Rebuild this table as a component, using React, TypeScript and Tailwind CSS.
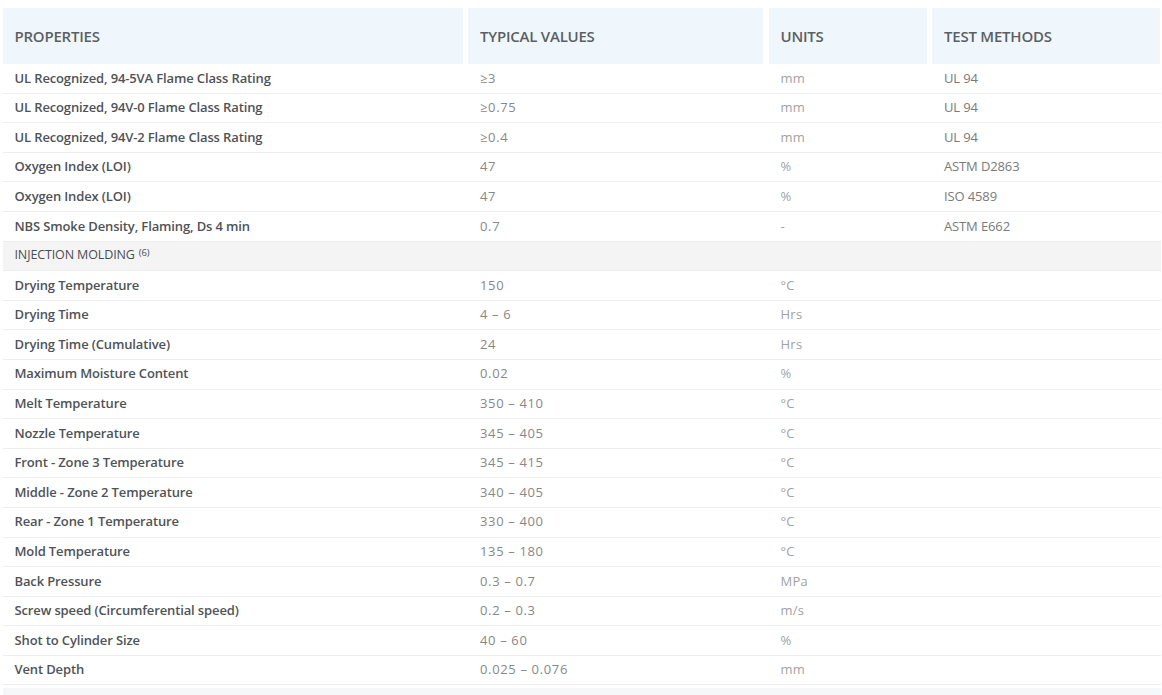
import React from "react";

type Row = {
  name: string;
  value: string;
  unit: string;
  method?: string;
};

const flameRows: Row[] = [
  { name: "UL Recognized, 94-5VA Flame Class Rating", value: "≥3", unit: "mm", method: "UL 94" },
  { name: "UL Recognized, 94V-0 Flame Class Rating", value: "≥0.75", unit: "mm", method: "UL 94" },
  { name: "UL Recognized, 94V-2 Flame Class Rating", value: "≥0.4", unit: "mm", method: "UL 94" },
  { name: "Oxygen Index (LOI)", value: "47", unit: "%", method: "ASTM D2863" },
  { name: "Oxygen Index (LOI)", value: "47", unit: "%", method: "ISO 4589" },
  { name: "NBS Smoke Density, Flaming, Ds 4 min", value: "0.7", unit: "-", method: "ASTM E662" },
];

const moldingRows: Row[] = [
  { name: "Drying Temperature", value: "150", unit: "°C" },
  { name: "Drying Time", value: "4 – 6", unit: "Hrs" },
  { name: "Drying Time (Cumulative)", value: "24", unit: "Hrs" },
  { name: "Maximum Moisture Content", value: "0.02", unit: "%" },
  { name: "Melt Temperature", value: "350 – 410", unit: "°C" },
  { name: "Nozzle Temperature", value: "345 – 405", unit: "°C" },
  { name: "Front - Zone 3 Temperature", value: "345 – 415", unit: "°C" },
  { name: "Middle - Zone 2 Temperature", value: "340 – 405", unit: "°C" },
  { name: "Rear - Zone 1 Temperature", value: "330 – 400", unit: "°C" },
  { name: "Mold Temperature", value: "135 – 180", unit: "°C" },
  { name: "Back Pressure", value: "0.3 – 0.7", unit: "MPa" },
  { name: "Screw speed (Circumferential speed)", value: "0.2 – 0.3", unit: "m/s" },
  { name: "Shot to Cylinder Size", value: "40 – 60", unit: "%" },
  { name: "Vent Depth", value: "0.025 – 0.076", unit: "mm" },
];

const cols = "grid grid-cols-[460px_295px_158px_228px] gap-x-[5.5px]";

function HeaderCell({ label }: { label: string }) {
  return (
    <div className="flex h-[56px] items-center bg-[#f0f7fc] px-3 text-[15px] font-semibold uppercase tracking-[-0.015em] text-[#5b5f63]">
      {label}
    </div>
  );
}

function DataRow({ row }: { row: Row }) {
  return (
    <div className={`${cols} h-[29.6px] items-center border-b border-[#eeeeee] text-[13px]`}>
      <div className="px-3 font-semibold tracking-[-0.01em] text-[#4f5357]">{row.name}</div>
      <div className="px-3 font-normal tracking-[0.05em] text-[#888888]">{row.value}</div>
      <div className="px-3 font-normal tracking-[0.02em] text-[#a2a2a2]">{row.unit}</div>
      <div className="px-3 font-normal tracking-[-0.01em] text-[#7a7a7a]">{row.method ?? ""}</div>
    </div>
  );
}

export default function App() {
  return (
    <div className="min-h-[695px] bg-white pl-[2.5px] pt-2 font-['Open_Sans',sans-serif]">
      <div className="w-[1158px]">
        <div className={cols}>
          <HeaderCell label="Properties" />
          <HeaderCell label="Typical Values" />
          <HeaderCell label="Units" />
          <HeaderCell label="Test Methods" />
        </div>
        {flameRows.map((row, i) => (
          <DataRow key={`f-${i}`} row={row} />
        ))}
        <div className="flex h-[29.6px] items-center border-b border-[#eeeeee] bg-[#f4f4f5] px-3 text-[12.5px] font-normal tracking-[-0.01em] text-[#4a4e52]">
          INJECTION MOLDING
          <sup className="relative -top-[3px] ml-1 text-[9.5px]">(6)</sup>
        </div>
        {moldingRows.map((row, i) => (
          <DataRow key={`m-${i}`} row={row} />
        ))}
        <div className="mt-[3px] h-[20px] bg-[#f6f7f8]" />
      </div>
    </div>
  );
}
